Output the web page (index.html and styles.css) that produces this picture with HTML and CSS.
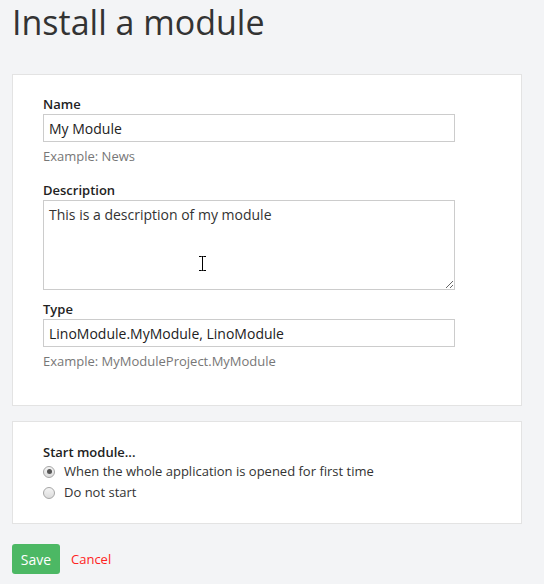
FILE: index.html
```html
<!DOCTYPE html>
<html>
<head>
<meta charset="utf-8">
<link rel="stylesheet" href="styles.css">
</head>
<body>
<div class="page">
  <h1 class="title">Install a module</h1>
  <form class="form">
    <div class="card">
      <div class="group">
        <label class="label">Name</label>
        <input class="control" type="text" value="My Module">
        <div class="help">Example: News</div>
      </div>
      <div class="group">
        <label class="label">Description</label>
        <div class="area-wrap">
          <textarea class="control area">This is a description of my module</textarea>
          <svg class="ibeam" width="9" height="17" viewBox="0 0 9 17"><path d="M1 1.5h2.5M5.5 1.5H8M4.5 2v13M1 15.5h2.5M5.5 15.5H8" stroke="#000" stroke-width="1" fill="none"/><path d="M3.5 1.5h2M3.5 15.5h2" stroke="#000" stroke-width="1"/></svg>
        </div>
      </div>
      <div class="group">
        <label class="label">Type</label>
        <input class="control" type="text" value="LinoModule.MyModule, LinoModule">
        <div class="help">Example: MyModuleProject.MyModule</div>
      </div>
    </div>
    <div class="card card-second">
      <div class="label">Start module...</div>
      <label class="radio"><span class="dot checked"></span>When the whole application is opened for first time</label>
      <label class="radio"><span class="dot"></span>Do not start</label>
    </div>
    <div class="actions">
      <button type="button" class="btn-save">Save</button>
      <a class="cancel" href="#">Cancel</a>
    </div>
  </form>
</div>
</body>
</html>
```

FILE: styles.css
```css
html, body {
  margin: 0;
  padding: 0;
  background: #f3f4f6;
}
body {
  font-family: "Open Sans", "Liberation Sans", sans-serif;
  font-size: 13px;
  color: #333;
}
.page {
  padding: 0 22px 0 12px;
}
.title {
  margin: 0;
  padding-top: 0;
  font-size: 34px;
  font-weight: 400;
  line-height: 44px;
  color: #333;
  height: 74px;
}
.card {
  background: #fff;
  border: 1px solid #e3e3e3;
  padding: 20px 30px 19px 30px;
}
.card-second {
  margin-top: 15px;
  padding-top: 21px;
  padding-bottom: 20px;
}
.group {
  margin-bottom: 10px;
}
.group:last-child {
  margin-bottom: 0;
}
.label {
  display: block;
  font-weight: 600;
  line-height: 18px;
  margin-bottom: 1px;
  color: #222;
}
.card-second .label {
  margin-bottom: 0;
}
.control {
  display: block;
  box-sizing: border-box;
  width: 412px;
  height: 28px;
  border: 1px solid #ccc;
  padding: 0 5px;
  font-family: "Open Sans", "Liberation Sans", sans-serif;
  font-size: 14px;
  color: #222;
  background: #fff;
  margin: 0;
  outline: none;
}
.area-wrap {
  position: relative;
  width: 412px;
}
.area {
  height: 90px;
  padding: 4px 5px 3px;
  line-height: 20px;
  resize: vertical;
  color: #333;
}
.ibeam {
  position: absolute;
  left: 155px;
  top: 55px;
}
.help {
  margin-top: 5px;
  margin-bottom: 16px;
  line-height: 18px;
  color: #777;
}
.radio {
  display: flex;
  align-items: center;
  height: 21px;
  line-height: 21px;
  color: #333;
}
.dot {
  box-sizing: border-box;
  width: 12px;
  height: 12px;
  border-radius: 50%;
  border: 1px solid #a6a6a6;
  background: linear-gradient(#f4f4f4, #dcdcdc);
  margin-right: 9px;
  position: relative;
}
.dot.checked::after {
  content: "";
  position: absolute;
  left: 2.5px;
  top: 2.5px;
  width: 5px;
  height: 5px;
  border-radius: 50%;
  background: #555;
}
.actions {
  display: flex;
  align-items: center;
  margin-top: 20px;
}
.btn-save {
  width: 48px;
  height: 30px;
  background: #4cb864;
  color: #fff;
  border: none;
  border-radius: 3px;
  font-family: "Open Sans", "Liberation Sans", sans-serif;
  font-size: 14px;
  padding: 0;
  margin: 0 11px 0 0;
}
.cancel {
  color: #f22;
  text-decoration: none;
  font-size: 13px;
}
```
